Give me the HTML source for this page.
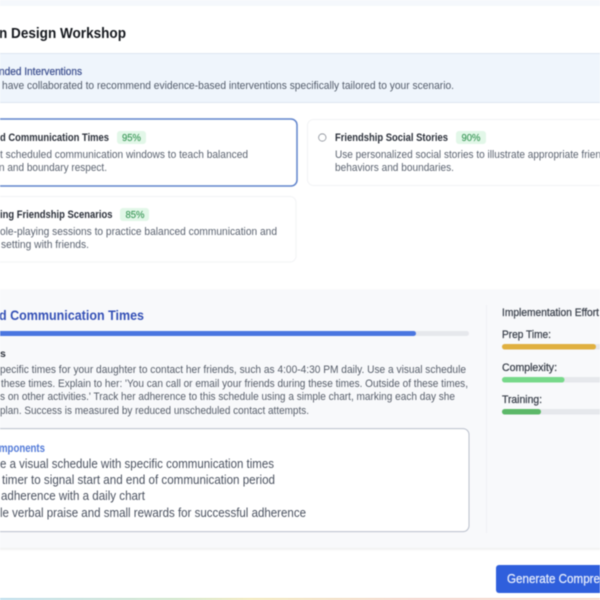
<!DOCTYPE html>
<html><head><meta charset="utf-8">
<style>
html,body{margin:0;padding:0;width:600px;height:600px;overflow:hidden;background:#fff}
svg{display:block;filter:blur(.4px)}
text{font-family:"Liberation Sans",sans-serif;white-space:pre}
.b{font-weight:700}
.d{fill:#5b6370;font-size:11px}
.t{fill:#2b303a;font-size:11px;font-weight:700}
.g{fill:#3f9a5c;font-size:10px;font-weight:400;stroke:#3f9a5c;stroke-width:.15}
.p{fill:#565d69;font-size:11px}
.l{fill:#4b5260;font-size:12.5px}
.e{fill:#3a404b;font-size:11px}
.m{stroke-width:.25}
</style></head><body>
<svg width="600" height="600" viewBox="0 0 600 600" xmlns="http://www.w3.org/2000/svg">
<defs>
<linearGradient id="rb" x1="0" x2="1" y1="0" y2="0">
<stop offset="0" stop-color="#bcdcec"/><stop offset=".3" stop-color="#cfe6c8"/><stop offset=".42" stop-color="#f2e8b8"/><stop offset=".7" stop-color="#f3d3cc"/><stop offset="1" stop-color="#f6d8c8"/>
</linearGradient>
<filter id="sh" x="-5%" y="-5%" width="110%" height="110%"><feDropShadow dx="0" dy="1" stdDeviation="1.5" flood-color="#000" flood-opacity=".09"/></filter>
</defs>
<rect width="600" height="600" fill="#fff"/>
<rect width="600" height="6" fill="#f5f8fc"/>
<text class="b" x="-1" y="38" font-size="14.5" fill="#15181e" textLength="127" lengthAdjust="spacingAndGlyphs">n Design Workshop</text>

<rect x="-4" y="53.5" width="608" height="49" fill="#eff5fc" stroke="#dde6f0"/>
<text class="m" x="-1" y="75" font-size="11" fill="#3f5190" stroke="#3f5190" textLength="83" lengthAdjust="spacingAndGlyphs">nded Interventions</text>
<text x="2" y="89" font-size="11" fill="#525b6a" textLength="452" lengthAdjust="spacingAndGlyphs">have collaborated to recommend evidence-based interventions specifically tailored to your scenario.</text>

<rect x="-20" y="119" width="317" height="67" rx="6" fill="#fff" stroke="#5f83cc" stroke-width="1.5"/>
<text class="t" x="0" y="141" textLength="109" lengthAdjust="spacingAndGlyphs">d Communication Times</text>
<rect x="117" y="131" width="29" height="13" rx="3" fill="#e2f7e8"/>
<text class="g" x="122" y="141" textLength="19" lengthAdjust="spacingAndGlyphs">95%</text>
<text class="d" x="0" y="158" textLength="248" lengthAdjust="spacingAndGlyphs">t scheduled communication windows to teach balanced</text>
<text class="d" x="-1" y="171" textLength="108" lengthAdjust="spacingAndGlyphs">n and boundary respect.</text>

<rect x="307.5" y="119.5" width="320" height="66" rx="6" fill="#fff" stroke="#f2f3f5"/>
<circle cx="322.3" cy="137.5" r="3.7" fill="#fff" stroke="#8a8f98" stroke-width=".8"/>
<text class="t" x="335" y="141" textLength="113" lengthAdjust="spacingAndGlyphs">Friendship Social Stories</text>
<rect x="456" y="131" width="30" height="13" rx="3" fill="#e2f7e8"/>
<text class="g" x="461.5" y="141" textLength="19" lengthAdjust="spacingAndGlyphs">90%</text>
<text class="d" x="335" y="158" textLength="290" lengthAdjust="spacingAndGlyphs">Use personalized social stories to illustrate appropriate friendship</text>
<text class="d" x="335" y="171" textLength="119" lengthAdjust="spacingAndGlyphs">behaviors and boundaries.</text>

<rect x="-20" y="196.5" width="316" height="65.5" rx="6" fill="#fff" stroke="#f2f3f5"/>
<text class="t" x="0" y="218" textLength="112.5" lengthAdjust="spacingAndGlyphs">ing Friendship Scenarios</text>
<rect x="120" y="208" width="29" height="13" rx="3" fill="#e2f7e8"/>
<text class="g" x="125.5" y="218" textLength="19" lengthAdjust="spacingAndGlyphs">85%</text>
<text class="d" x="0" y="235" textLength="277" lengthAdjust="spacingAndGlyphs">ole-playing sessions to practice balanced communication and</text>
<text class="d" x="1" y="248" textLength="88" lengthAdjust="spacingAndGlyphs">setting with friends.</text>

<rect x="-10" y="290" width="620" height="258" fill="#f8f9fb" filter="url(#sh)"/>
<text class="b" x="-1" y="320" font-size="13.5" fill="#3450b6" textLength="145" lengthAdjust="spacingAndGlyphs">d Communication Times</text>
<rect x="-10" y="331" width="479" height="5" rx="2.5" fill="#e6e8ec"/>
<rect x="-10" y="331" width="426" height="5" rx="2.5" fill="#4a76e0"/>
<text class="b" x="0" y="357" font-size="10.5" fill="#30353f">s</text>
<text class="p" x="0" y="373" textLength="466" lengthAdjust="spacingAndGlyphs">pecific times for your daughter to contact her friends, such as 4:00-4:30 PM daily. Use a visual schedule</text>
<text class="p" x="1" y="387" textLength="467" lengthAdjust="spacingAndGlyphs">these times. Explain to her: 'You can call or email your friends during these times. Outside of these times,</text>
<text class="p" x="0" y="400" textLength="455" lengthAdjust="spacingAndGlyphs">s on other activities.' Track her adherence to this schedule using a simple chart, marking each day she</text>
<text class="p" x="0" y="414" textLength="309" lengthAdjust="spacingAndGlyphs">plan. Success is measured by reduced unscheduled contact attempts.</text>

<rect x="-20" y="428.6" width="489" height="103" rx="6" fill="#fff" stroke="#b9bfcb" stroke-width="1"/>
<text class="b" x="-1" y="452" font-size="12" fill="#527ad8" textLength="46" lengthAdjust="spacingAndGlyphs">mponents</text>
<text class="l" x="0" y="468" textLength="274" lengthAdjust="spacingAndGlyphs">e a visual schedule with specific communication times</text>
<text class="l" x="2" y="484" textLength="273" lengthAdjust="spacingAndGlyphs">timer to signal start and end of communication period</text>
<text class="l" x="1" y="500" textLength="144" lengthAdjust="spacingAndGlyphs">adherence with a daily chart</text>
<text class="l" x="0" y="517" textLength="306" lengthAdjust="spacingAndGlyphs">le verbal praise and small rewards for successful adherence</text>

<rect x="486" y="305" width="1" height="228" fill="#f0f1f4"/>
<text class="e m" x="502" y="316" stroke="#3a404b" textLength="97" lengthAdjust="spacingAndGlyphs">Implementation Effort</text>
<text class="e m" x="502" y="338" stroke="#3a404b" textLength="49" lengthAdjust="spacingAndGlyphs">Prep Time:</text>
<rect x="502" y="344" width="110" height="5.5" rx="2.7" fill="#e6e8ec"/>
<rect x="502" y="344" width="94" height="5.5" rx="2.7" fill="#e0b040"/>
<text class="e m" x="502" y="371" stroke="#3a404b" textLength="55" lengthAdjust="spacingAndGlyphs">Complexity:</text>
<rect x="502" y="377" width="110" height="5.5" rx="2.7" fill="#e6e8ec"/>
<rect x="502" y="377" width="62.5" height="5.5" rx="2.7" fill="#77d98a"/>
<text class="e m" x="502" y="403" stroke="#3a404b" textLength="40" lengthAdjust="spacingAndGlyphs">Training:</text>
<rect x="502" y="409" width="110" height="5.5" rx="2.7" fill="#e6e8ec"/>
<rect x="502" y="409" width="39" height="5.5" rx="2.7" fill="#5cb868"/>

<rect x="496" y="565" width="120" height="28" rx="3" fill="#2f5fdc"/>
<text x="507" y="583" font-size="12.5" fill="#e8eefc" stroke="#e8eefc" stroke-width=".25" textLength="93" lengthAdjust="spacingAndGlyphs">Generate Compre</text>
<rect x="0" y="598" width="600" height="2" fill="url(#rb)"/>
</svg>
</body></html>
